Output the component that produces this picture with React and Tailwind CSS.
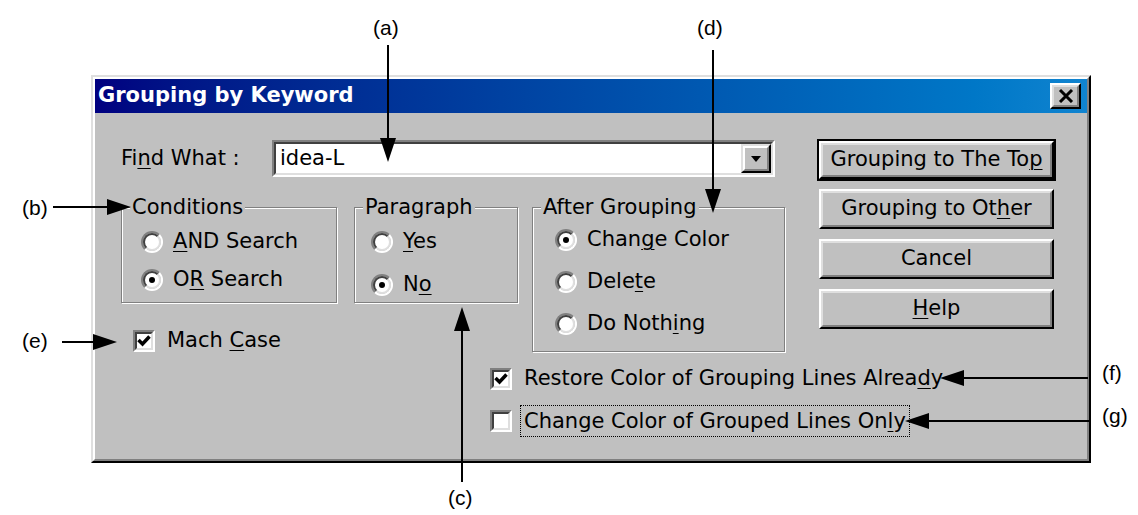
import React from "react";

// Win98-style dialog with callout annotations (a)–(g)

function Mn({ children }) {
  return <u className="underline decoration-1 underline-offset-[3px]">{children}</u>;
}

function Radio({ checked }) {
  return (
    <span className="inline-flex h-[22px] w-[22px] shrink-0 rounded-full border-2 border-t-[#808080] border-l-[#808080] border-r-white border-b-white">
      <span className="flex h-full w-full items-center justify-center rounded-full border-2 border-t-[#404040] border-l-[#404040] border-r-[#dfdfdf] border-b-[#dfdfdf] bg-white">
        {checked && <span className="h-[6px] w-[6px] rounded-full bg-black" />}
      </span>
    </span>
  );
}

function Check({ checked }) {
  return (
    <span className="inline-flex h-[22px] w-[22px] shrink-0 border-2 border-t-[#808080] border-l-[#808080] border-r-white border-b-white">
      <span className="flex h-full w-full items-center justify-center border-2 border-t-[#404040] border-l-[#404040] border-r-[#dfdfdf] border-b-[#dfdfdf] bg-white">
        {checked && (
          <svg width="14" height="14" viewBox="0 0 14 14">
            <polyline points="1.5,6 5.5,10 12.5,2.5" fill="none" stroke="#000" strokeWidth="3.5" />
          </svg>
        )}
      </span>
    </span>
  );
}

function Group({ label, className, inner, children }) {
  return (
    <fieldset
      className={`shrink-0 border border-[#808080] shadow-[inset_1px_1px_0_#fff,1px_1px_0_#fff] ${className}`}
    >
      <legend className="ml-[8px] bg-[#c0c0c0] px-[2px] leading-[24px]">{label}</legend>
      <div className={inner}>{children}</div>
    </fieldset>
  );
}

function RadioRow({ checked, children, className = "" }) {
  return (
    <div className={`flex items-center gap-[10px] ${className}`}>
      <Radio checked={checked} />
      <span>{children}</span>
    </div>
  );
}

function Btn({ children, isDefault }) {
  const face = (
    <div className="flex h-full w-full border-2 border-t-white border-l-white border-r-black border-b-black">
      <div className="flex h-full w-full items-center justify-center border-2 border-t-[#dfdfdf] border-l-[#dfdfdf] border-r-[#808080] border-b-[#808080]">
        {children}
      </div>
    </div>
  );
  if (isDefault) {
    return <div className="h-[42px] w-[239px] border-2 border-black">{face}</div>;
  }
  return <div className="mx-auto h-[40px] w-[235px]">{face}</div>;
}

function Arrow({ x1, y1, x2, y2 }) {
  const dx = x2 - x1;
  const dy = y2 - y1;
  const len = Math.hypot(dx, dy);
  const ux = dx / len;
  const uy = dy / len;
  const bx = x2 - ux * 24;
  const by = y2 - uy * 24;
  const px = -uy * 8;
  const py = ux * 8;
  return (
    <g>
      <line x1={x1} y1={y1} x2={bx} y2={by} stroke="#000" strokeWidth="2" />
      <polygon points={`${x2},${y2} ${bx + px},${by + py} ${bx - px},${by - py}`} fill="#000" />
    </g>
  );
}

export default function App() {
  return (
    <div className="relative h-[515px] w-[1138px] overflow-hidden bg-white font-['DejaVu_Sans',sans-serif] text-[21px] text-black">
      <div className="ml-[91px] mt-[75px] h-[388px] w-[1000px] border-2 border-t-[#dfdfdf] border-l-[#dfdfdf] border-r-black border-b-black bg-[#c0c0c0]">
        <div className="flex h-full flex-col border-2 border-t-white border-l-white border-r-[#808080] border-b-[#808080]">
          <div className="flex h-[34px] items-center justify-between bg-gradient-to-r from-[#000080] to-[#1084d0] pl-[3px] pr-[6px]">
            <span className="text-[21px] font-bold text-white">Grouping by Keyword</span>
            <div className="h-[26px] w-[31px] border-2 border-t-white border-l-white border-r-black border-b-black bg-[#c0c0c0]">
              <div className="flex h-full w-full items-center justify-center border-2 border-t-[#dfdfdf] border-l-[#dfdfdf] border-r-[#808080] border-b-[#808080]">
                <svg width="16" height="14" viewBox="0 0 16 14">
                  <path d="M2 1 L14 13 M14 1 L2 13" stroke="#000" strokeWidth="3" />
                </svg>
              </div>
            </div>
          </div>

          <div className="flex pl-[26px]">
            <div className="w-[664px] shrink-0">
              <div className="mt-[27px] flex h-[37px] items-center">
                <span className="w-[151px]">
                  Fi<Mn>n</Mn>d What :
                </span>
                <div className="flex h-[37px] w-[503px] border-2 border-t-[#808080] border-l-[#808080] border-r-white border-b-white">
                  <div className="flex h-full w-full items-center border-2 border-t-[#404040] border-l-[#404040] border-r-[#dfdfdf] border-b-[#dfdfdf] bg-white">
                    <span className="flex-1 pl-[4px]">idea-L</span>
                    <div className="h-full w-[30px] border-2 border-t-[#dfdfdf] border-l-[#dfdfdf] border-r-black border-b-black bg-[#c0c0c0]">
                      <div className="flex h-full w-full items-center justify-center border-2 border-t-white border-l-white border-r-[#808080] border-b-[#808080]">
                        <svg width="10" height="6" viewBox="0 0 10 6">
                          <polygon points="0,0 10,0 5,6" fill="#000" />
                        </svg>
                      </div>
                    </div>
                  </div>
                </div>
              </div>

              <div className="mt-[18px] flex">
                <div className="w-[216px] shrink-0">
                  <Group label="Conditions" className="h-[108px] w-[216px]" inner="pl-[19px] pt-[4px]">
                    <RadioRow checked={false} className="h-[38px]">
                      <Mn>A</Mn>ND Search
                    </RadioRow>
                    <RadioRow checked className="h-[38px]">
                      O<Mn>R</Mn> Search
                    </RadioRow>
                  </Group>
                  <div className="ml-[12px] mt-[27px] flex h-[22px] items-center gap-[12px]">
                    <Check checked />
                    <span>
                      Mach <Mn>C</Mn>ase
                    </span>
                  </div>
                </div>

                <Group label="Paragraph" className="ml-[17px] h-[108px] w-[164px]" inner="pl-[16px] pt-[4px]">
                  <RadioRow checked={false} className="h-[38px]">
                    <Mn>Y</Mn>es
                  </RadioRow>
                  <RadioRow checked className="mt-[5px] h-[38px]">
                    N<Mn>o</Mn>
                  </RadioRow>
                </Group>

                <Group label="After Grouping" className="ml-[14px] h-[157px] w-[253px]" inner="pl-[22px]">
                  <RadioRow checked className="h-[42px]">
                    Chan<Mn>g</Mn>e Color
                  </RadioRow>
                  <RadioRow checked={false} className="h-[42px]">
                    Dele<Mn>t</Mn>e
                  </RadioRow>
                  <RadioRow checked={false} className="h-[42px]">
                    Do Noth<Mn>i</Mn>ng
                  </RadioRow>
                </Group>
              </div>

              <div className="ml-[369px]">
                <div className="mt-[11px] flex h-[32px] items-center gap-[12px]">
                  <Check checked />
                  <span className="whitespace-nowrap">
                    Restore Color of Grouping Lines Alrea<Mn>d</Mn>y
                  </span>
                </div>
                <div className="mt-[10px] flex h-[32px] items-center gap-[8px]">
                  <Check checked={false} />
                  <span className="whitespace-nowrap border border-dotted border-black px-[3px] leading-[30px]">
                    Change Color of Grouped Lines On<Mn>l</Mn>y
                  </span>
                </div>
              </div>
            </div>

            <div className="ml-[32px] mt-[26px] flex w-[239px] shrink-0 flex-col">
              <Btn isDefault>
                Grouping to The To<Mn>p</Mn>
              </Btn>
              <div className="mt-[8px]">
                <Btn>
                  Grouping to Ot<Mn>h</Mn>er
                </Btn>
              </div>
              <div className="mt-[10px]">
                <Btn>Cancel</Btn>
              </div>
              <div className="mt-[10px]">
                <Btn>
                  <Mn>H</Mn>elp
                </Btn>
              </div>
            </div>
          </div>
        </div>
      </div>

      <svg className="pointer-events-none absolute left-0 top-0" width="1138" height="515">
        <Arrow x1={388} y1={45} x2={388} y2={162} />
        <Arrow x1={713} y1={50} x2={713} y2={213} />
        <Arrow x1={53} y1={207} x2={131} y2={207} />
        <Arrow x1={62} y1={342} x2={117} y2={342} />
        <Arrow x1={462} y1={482} x2={462} y2={307} />
        <Arrow x1={1088} y1={378} x2={940} y2={378} />
        <Arrow x1={1090} y1={421} x2={905} y2={421} />
      </svg>

      <div className="font-['Liberation_Sans',Arial,sans-serif] text-[21px]">
        <span className="absolute left-[373px] top-[12px]">(a)</span>
        <span className="absolute left-[697px] top-[12px]">(d)</span>
        <span className="absolute left-[22px] top-[192px]">(b)</span>
        <span className="absolute left-[22px] top-[325px]">(e)</span>
        <span className="absolute left-[448px] top-[482px]">(c)</span>
        <span className="absolute left-[1102px] top-[357px]">(f)</span>
        <span className="absolute left-[1102px] top-[400px]">(g)</span>
      </div>
    </div>
  );
}
